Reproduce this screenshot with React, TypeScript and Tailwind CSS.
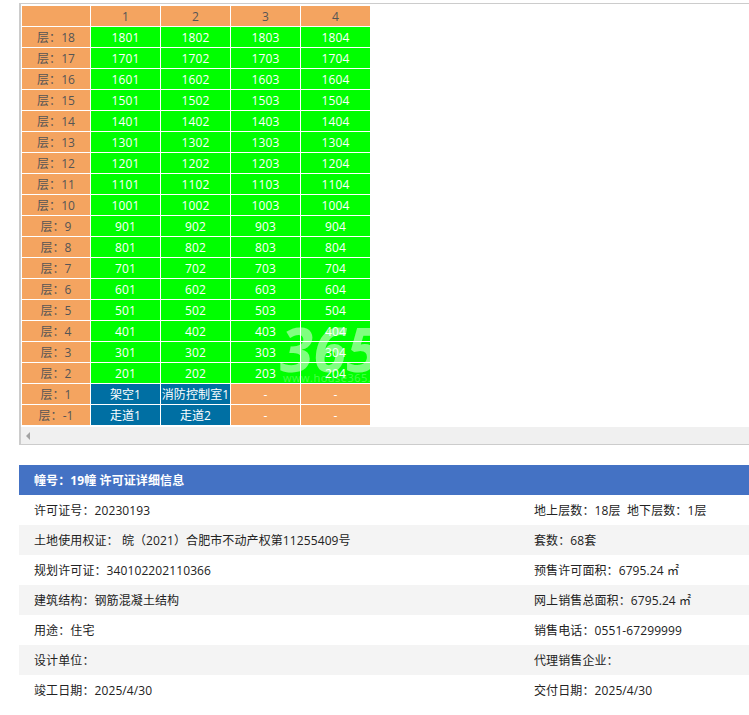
const font = { fontFamily: '"Open Sans", "Noto Sans CJK SC", sans-serif' };

const floors = [18, 17, 16, 15, 14, 13, 12, 11, 10, 9, 8, 7, 6, 5, 4, 3, 2];

const details = [
  ['许可证号：20230193', '地上层数：18层  地下层数：1层'],
  ['土地使用权证： 皖（2021）合肥市不动产权第11255409号', '套数：68套'],
  ['规划许可证：340102202110366', '预售许可面积：6795.24 ㎡'],
  ['建筑结构：钢筋混凝土结构', '网上销售总面积：6795.24 ㎡'],
  ['用途：住宅', '销售电话：0551-67299999'],
  ['设计单位：', '代理销售企业：'],
  ['竣工日期：2025/4/30', '交付日期：2025/4/30'],
];

function FloorCell({ children }: { children?: React.ReactNode }) {
  return <div className="w-[68px] h-5 pt-px bg-[#f4a460] text-[#555] flex items-center justify-center">{children}</div>;
}

function Cell({ children, color }: { children: React.ReactNode; color: 'green' | 'blue' | 'orange' }) {
  const bg = color === 'green' ? 'bg-[#00ff00]' : color === 'blue' ? 'bg-[#006fa3]' : 'bg-[#f4a460]';
  return (
    <div className={`w-[69px] h-5 pt-px ${bg} text-white flex items-center justify-center whitespace-nowrap`}>
      {children}
    </div>
  );
}

function Row({ children }: { children: React.ReactNode }) {
  return <div className="flex gap-px">{children}</div>;
}

export default function App() {
  return (
    <div
      className="w-[749px] h-[715px] overflow-hidden bg-white text-xs tracking-[0.1px] [text-spacing-trim:space-all]"
      style={font}
    >
      {/* Floor table */}
      <div className="ml-[19px] mt-[3px] w-[760px] h-[442px] border border-l-2 border-r-0 border-[#cccccc] flex flex-col">
        <div className="relative pl-px pt-[2px] flex flex-col gap-px h-[421px] w-[350px] overflow-hidden">
          <Row>
            <FloorCell />
            {[1, 2, 3, 4].map((n) => (
              <div key={n} className="w-[69px] h-5 pt-px bg-[#f4a460] text-[#555] flex items-center justify-center">
                {n}
              </div>
            ))}
          </Row>
          {floors.map((f) => (
            <Row key={f}>
              <FloorCell>层：{f}</FloorCell>
              {[1, 2, 3, 4].map((n) => (
                <Cell key={n} color="green">
                  {f * 100 + n}
                </Cell>
              ))}
            </Row>
          ))}
          <Row>
            <FloorCell>层：1</FloorCell>
            <Cell color="blue">架空1</Cell>
            <Cell color="blue">消防控制室1</Cell>
            <Cell color="orange">-</Cell>
            <Cell color="orange">-</Cell>
          </Row>
          <Row>
            <FloorCell>层：-1</FloorCell>
            <Cell color="blue">走道1</Cell>
            <Cell color="blue">走道2</Cell>
            <Cell color="orange">-</Cell>
            <Cell color="orange">-</Cell>
          </Row>

          {/* Watermark */}
          <div className="absolute left-[259px] top-[316px] pointer-events-none leading-none">
            <div className="text-[60px] font-bold italic leading-[58px] text-white/50">365</div>
            <div className="pl-[3px] text-[11px] leading-[10px] -mt-[5px] tracking-[0.5px] whitespace-nowrap text-white/30">
              www.house365.com
            </div>
          </div>
        </div>
        {/* Scrollbar */}
        <div className="mt-auto h-[17px] bg-[#f0f0f0] flex items-center pl-[5px]">
          <div className="w-0 h-0 border-y-[4px] border-y-transparent border-r-[4px] border-r-[#a3a3a3]" />
        </div>
      </div>

      {/* Permit details */}
      <div className="ml-[19px] mt-5 text-[#222]">
        <div className="h-[30px] pt-px bg-[#4472c4] text-white font-bold flex items-center pl-[15px]">
          幢号：19幢 许可证详细信息
        </div>
        {details.map(([left, right], i) => (
          <div key={left} className={`h-[30px] pt-px flex items-center ${i % 2 === 1 ? 'bg-[#f4f4f4]' : 'bg-white'}`}>
            <div className="w-[515px] pl-[15px] whitespace-pre">{left}</div>
            <div className="whitespace-pre">{right}</div>
          </div>
        ))}
      </div>
    </div>
  );
}
